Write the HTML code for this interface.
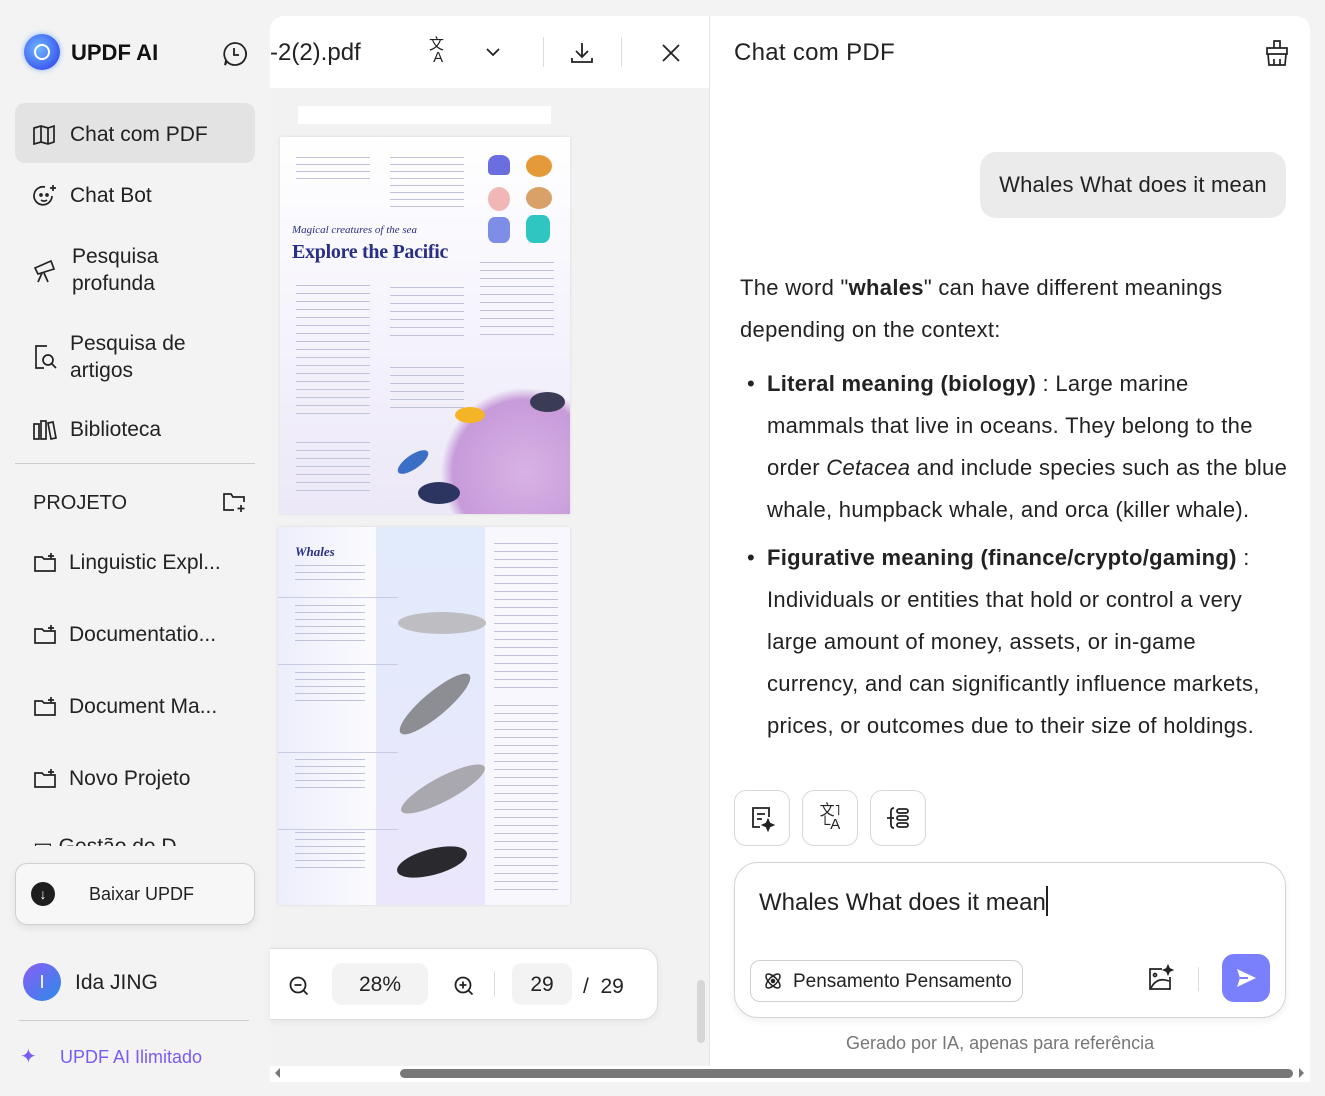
<!DOCTYPE html>
<html><head><meta charset="utf-8"><style>
*{margin:0;padding:0;box-sizing:border-box}
body{width:1325px;height:1096px;background:#f3f3f3;font-family:"Liberation Sans",sans-serif;color:#222;position:relative;overflow:hidden}
.a{position:absolute}
.nav{position:absolute;left:15px;width:240px;display:flex;align-items:center;font-size:21px;color:#222}
.nav svg{margin-left:17px;margin-right:12px;flex:none}
.ln{position:absolute;height:2px;background:#b9bcd8}
.btn{position:absolute;width:56px;height:56px;border:1px solid #d8d8d8;border-radius:12px;background:#fff;display:flex;align-items:center;justify-content:center}
.ct{font-size:22px;line-height:42px;letter-spacing:.3px;white-space:nowrap}
</style></head><body>
<!-- sidebar -->
<div class="a" style="left:24px;top:34px;width:36px;height:36px;border-radius:50%;background:radial-gradient(circle at 40% 40%,#6fb8ff,#3d5cf0 70%);box-shadow:0 0 6px #8ab4ff"></div>
<div class="a" style="left:34px;top:44px;width:16px;height:16px;border:2px solid #fff;border-radius:50%"></div>
<div class="a" style="left:71px;top:40px;font-size:22px;font-weight:bold;color:#111">UPDF AI</div>
<svg class="a" style="left:222px;top:41px" width="26" height="26" viewBox="0 0 26 26" fill="none" stroke="#222" stroke-width="1.8"><path d="M13 2a11 11 0 1 1-8 18.5L3 24l1-5A11 11 0 0 1 13 2z"/><path d="M12 7v7h5"/></svg>

<div class="a" style="left:15px;top:103px;width:240px;height:60px;background:#e3e3e3;border-radius:10px"></div>
<div class="nav" style="top:105px;height:60px"><svg width="26" height="24" viewBox="0 0 26 24" fill="none" stroke="#222" stroke-width="1.7"><path d="M2 5l7-2 7 2 6-2v16l-6 2-7-2-7 2z"/><path d="M9 3v16M16 5v16"/></svg>Chat com PDF</div>
<div class="nav" style="top:166px;height:60px"><svg width="26" height="26" viewBox="0 0 26 26" fill="none" stroke="#222" stroke-width="1.7"><path d="M20 13a9 9 0 1 1-7-9"/><circle cx="9" cy="12" r="1"/><circle cx="15" cy="12" r="1"/><path d="M9 17c2 1.5 4 1.5 6 0"/><path d="M21 2v6M18 5h6"/></svg>Chat Bot</div>
<div class="nav" style="top:240px;height:60px;line-height:27px"><svg width="28" height="28" viewBox="0 0 28 28" fill="none" stroke="#222" stroke-width="1.7"><path d="M3 12l16-7 3 8-16 5z"/><path d="M10 17l-4 9M12 17l4 9"/></svg>Pesquisa<br>profunda</div>
<div class="nav" style="top:327px;height:60px;line-height:27px"><svg width="26" height="28" viewBox="0 0 26 28" fill="none" stroke="#222" stroke-width="1.7"><path d="M15 3H4v22h8"/><circle cx="16" cy="17" r="5"/><path d="M20 21l4 4"/></svg>Pesquisa de<br>artigos</div>
<div class="nav" style="top:400px;height:60px"><svg width="26" height="24" viewBox="0 0 26 24" fill="none" stroke="#222" stroke-width="1.7"><rect x="2" y="6" width="5" height="15"/><rect x="9" y="3" width="5" height="18"/><path d="M16 5l5-1 3 16-5 1z"/></svg>Biblioteca</div>
<div class="a" style="left:15px;top:463px;width:240px;height:1px;background:#ccc"></div>
<div class="a" style="left:33px;top:492px;font-size:20px">PROJETO</div>
<svg class="a" style="left:222px;top:491px" width="26" height="22" viewBox="0 0 26 22" fill="none" stroke="#222" stroke-width="1.7"><path d="M12 19H2V3h7l2 3h11v5"/><path d="M19 14v7M15.5 17.5h7"/></svg>
<div class="nav" style="top:535px;height:56px;font-size:21px"><svg width="24" height="22" viewBox="0 0 24 22" fill="none" stroke="#222" stroke-width="1.7" style="margin-left:18px;margin-right:12px"><path d="M2 5h7l2 2h11v12H2z"/><path d="M18 1v6M15 4h6"/></svg>Linguistic Expl...</div>
<div class="nav" style="top:607px;height:56px"><svg width="24" height="22" viewBox="0 0 24 22" fill="none" stroke="#222" stroke-width="1.7" style="margin-left:18px;margin-right:12px"><path d="M2 5h7l2 2h11v12H2z"/><path d="M18 1v6M15 4h6"/></svg>Documentatio...</div>
<div class="nav" style="top:679px;height:56px"><svg width="24" height="22" viewBox="0 0 24 22" fill="none" stroke="#222" stroke-width="1.7" style="margin-left:18px;margin-right:12px"><path d="M2 5h7l2 2h11v12H2z"/><path d="M18 1v6M15 4h6"/></svg>Document Ma...</div>
<div class="nav" style="top:751px;height:56px"><svg width="24" height="22" viewBox="0 0 24 22" fill="none" stroke="#222" stroke-width="1.7" style="margin-left:18px;margin-right:12px"><path d="M2 5h7l2 2h11v12H2z"/><path d="M18 1v6M15 4h6"/></svg>Novo Projeto</div>
<div class="a" style="left:33px;top:838px;width:200px;height:8px;overflow:hidden"><div style="font-size:21px;color:#222;margin-top:-4px">▭ Gestão de D</div></div>
<div class="a" style="left:15px;top:863px;width:240px;height:62px;background:#f7f7f7;border:1px solid #d0d0d0;border-radius:12px;box-shadow:0 3px 8px rgba(0,0,0,.08)"></div>
<div class="a" style="left:31px;top:882px;width:24px;height:24px;border-radius:50%;background:#1e1e1e;color:#fff;font-size:14px;text-align:center;line-height:24px">↓</div>
<div class="a" style="left:89px;top:884px;font-size:18px">Baixar UPDF</div>
<div class="a" style="left:23px;top:963px;width:38px;height:38px;border-radius:50%;background:linear-gradient(135deg,#8b5cf6,#2b8be8);color:#fff;text-align:center;line-height:38px;font-size:18px">I</div>
<div class="a" style="left:75px;top:971px;font-size:21px">Ida JING</div>
<div class="a" style="left:19px;top:1020px;width:230px;height:1px;background:#ccc"></div>
<div class="a" style="left:20px;top:1044px;font-size:20px;color:#7b5cf0">✦</div>
<div class="a" style="left:60px;top:1047px;font-size:18px;color:#7b5cf0">UPDF AI Ilimitado</div>

<!-- main panel -->
<div class="a" style="left:270px;top:16px;width:1040px;height:1066px;background:#fff;border-radius:14px 14px 6px 6px;overflow:hidden">
 <div class="a" style="left:0;top:72px;width:439px;height:994px;background:#f2f2f2"></div>
 <div class="a" style="left:439px;top:0;width:1px;height:1066px;background:#e4e4e4"></div>
</div>
<div class="a" style="left:270px;top:39px;font-size:24px;color:#222">-2(2).pdf</div>
<div class="a" style="left:429px;top:38px;font-size:15px;line-height:13px;color:#222">文<br>&nbsp;A</div>
<svg class="a" style="left:484px;top:46px" width="18" height="12" viewBox="0 0 18 12" fill="none" stroke="#222" stroke-width="1.8"><path d="M3 3l6 6 6-6"/></svg>
<div class="a" style="left:543px;top:37px;width:1px;height:30px;background:#ddd"></div>
<svg class="a" style="left:569px;top:40px" width="26" height="26" viewBox="0 0 26 26" fill="none" stroke="#222" stroke-width="1.8"><path d="M13 3v14M7 11l6 6 6-6M3 18v4h20v-4"/></svg>
<div class="a" style="left:621px;top:37px;width:1px;height:30px;background:#ddd"></div>
<svg class="a" style="left:660px;top:42px" width="22" height="22" viewBox="0 0 22 22" stroke="#222" stroke-width="1.8"><path d="M3 3l16 16M19 3L3 19"/></svg>

<div class="a" style="left:298px;top:106px;width:253px;height:18px;background:#fff"></div>
<!-- page 1 -->
<div class="a" style="left:280px;top:137px;width:290px;height:377px;background:linear-gradient(180deg,#fff 0%,#f3f1fb 60%,#ece8f7 100%);box-shadow:0 0 3px rgba(0,0,0,.1);overflow:hidden">
 <div class="ln" style="left:16px;top:20px;width:74px;height:28px;background:repeating-linear-gradient(#c0c2dc 0 1px,transparent 1px 7px)"></div>
 <div class="ln" style="left:110px;top:20px;width:74px;height:56px;background:repeating-linear-gradient(#c0c2dc 0 1px,transparent 1px 7px)"></div>
 <div class="a" style="left:208px;top:18px;width:22px;height:20px;background:#6c6ee0;border-radius:40% 40% 4px 4px"></div>
 <div class="a" style="left:246px;top:18px;width:26px;height:22px;background:#e59a3a;border-radius:50%"></div>
 <div class="a" style="left:208px;top:50px;width:22px;height:24px;background:#f1b7b7;border-radius:50%"></div>
 <div class="a" style="left:246px;top:50px;width:26px;height:22px;background:#d9a067;border-radius:50%"></div>
 <div class="a" style="left:208px;top:80px;width:22px;height:26px;background:#7e8ee6;border-radius:30%"></div>
 <div class="a" style="left:246px;top:78px;width:24px;height:28px;background:#2fc6c2;border-radius:30%"></div>
 <div class="a" style="left:12px;top:87px;font-family:'Liberation Serif',serif;font-style:italic;font-size:11px;color:#2a2f86">Magical creatures of the sea</div>
 <div class="a" style="left:12px;top:104px;font-family:'Liberation Serif',serif;font-weight:bold;font-size:20px;color:#2a2f86;letter-spacing:-.3px">Explore the Pacific</div>
 <div class="ln" style="left:16px;top:148px;width:74px;height:130px;background:repeating-linear-gradient(#c0c2dc 0 1px,transparent 1px 8px)"></div>
 <div class="ln" style="left:110px;top:150px;width:74px;height:56px;background:repeating-linear-gradient(#c0c2dc 0 1px,transparent 1px 8px)"></div>
 <div class="ln" style="left:110px;top:230px;width:74px;height:48px;background:repeating-linear-gradient(#c0c2dc 0 1px,transparent 1px 8px)"></div>
 <div class="ln" style="left:200px;top:125px;width:74px;height:80px;background:repeating-linear-gradient(#c0c2dc 0 1px,transparent 1px 8px)"></div>
 <div class="ln" style="left:16px;top:305px;width:74px;height:50px;background:repeating-linear-gradient(#c0c2dc 0 1px,transparent 1px 8px)"></div>
 <div class="a" style="left:160px;top:250px;width:170px;height:170px;border-radius:50%;background:radial-gradient(circle,#d8b3e6,#c79ad9 60%,transparent 70%)"></div>
 <div class="a" style="left:175px;top:270px;width:30px;height:16px;background:#f3b525;border-radius:50%"></div>
 <div class="a" style="left:250px;top:255px;width:35px;height:20px;background:#3a3c55;border-radius:50%"></div>
 <div class="a" style="left:138px;top:345px;width:42px;height:22px;background:#2b3560;border-radius:50%"></div>
 <div class="a" style="left:115px;top:318px;width:36px;height:14px;background:#3b6fc6;border-radius:50%;transform:rotate(-35deg)"></div>
</div>
<!-- page 2 -->
<div class="a" style="left:278px;top:527px;width:292px;height:378px;background:#f7f7fd;box-shadow:0 0 3px rgba(0,0,0,.1);overflow:hidden">
 <div class="a" style="left:0;top:0;width:98px;height:378px;background:linear-gradient(90deg,#eceefb,#fbfbff)"></div>
 <div class="a" style="left:98px;top:0;width:109px;height:378px;background:linear-gradient(#e1ebfc,#ebe6fb)"></div>
 <div class="a" style="left:17px;top:17px;font-family:'Liberation Serif',serif;font-style:italic;font-weight:bold;font-size:13px;color:#2a2f86">Whales</div>
 <div class="ln" style="left:17px;top:38px;width:70px;height:16px;background:repeating-linear-gradient(#c0c2dc 0 1px,transparent 1px 7px)"></div>
 <div class="ln" style="left:17px;top:78px;width:70px;height:40px;background:repeating-linear-gradient(#c0c2dc 0 1px,transparent 1px 7px)"></div>
 <div class="ln" style="left:17px;top:145px;width:70px;height:30px;background:repeating-linear-gradient(#c0c2dc 0 1px,transparent 1px 7px)"></div>
 <div class="ln" style="left:17px;top:232px;width:70px;height:30px;background:repeating-linear-gradient(#c0c2dc 0 1px,transparent 1px 7px)"></div>
 <div class="ln" style="left:17px;top:305px;width:70px;height:40px;background:repeating-linear-gradient(#c0c2dc 0 1px,transparent 1px 7px)"></div>
 <div class="a" style="left:0;top:70px;width:120px;height:1px;background:#c9cbe3"></div>
 <div class="a" style="left:0;top:137px;width:120px;height:1px;background:#c9cbe3"></div>
 <div class="a" style="left:0;top:225px;width:120px;height:1px;background:#c9cbe3"></div>
 <div class="a" style="left:0;top:302px;width:120px;height:1px;background:#c9cbe3"></div>
 <div class="a" style="left:120px;top:85px;width:88px;height:22px;background:#bdbdc2;border-radius:50%"></div>
 <div class="a" style="left:112px;top:165px;width:90px;height:24px;background:#8d8d94;border-radius:50%;transform:rotate(-40deg)"></div>
 <div class="a" style="left:118px;top:250px;width:94px;height:24px;background:#a8a8ae;border-radius:50%;transform:rotate(-28deg)"></div>
 <div class="a" style="left:118px;top:322px;width:72px;height:26px;background:#2a2a2e;border-radius:50%;transform:rotate(-15deg)"></div>
 <div class="ln" style="left:216px;top:16px;width:64px;height:150px;background:repeating-linear-gradient(#c0c2dc 0 1px,transparent 1px 8px)"></div>
 <div class="ln" style="left:216px;top:178px;width:64px;height:190px;background:repeating-linear-gradient(#c0c2dc 0 1px,transparent 1px 8px)"></div>
</div>
<!-- zoom bar -->
<div class="a" style="left:270px;top:948px;width:388px;height:72px;background:#fff;border:1px solid #ddd;border-left:none;border-radius:0 16px 16px 0;box-shadow:0 2px 8px rgba(0,0,0,.06)"></div>
<svg class="a" style="left:288px;top:975px" width="22" height="22" viewBox="0 0 22 22" fill="none" stroke="#222" stroke-width="1.8"><circle cx="10" cy="10" r="7.5"/><path d="M6.5 10h7M15.5 15.5l4 4"/></svg>
<div class="a" style="left:332px;top:963px;width:96px;height:42px;background:#f3f3f3;border-radius:10px;text-align:center;line-height:44px;font-size:21px">28%</div>
<svg class="a" style="left:453px;top:975px" width="22" height="22" viewBox="0 0 22 22" fill="none" stroke="#222" stroke-width="1.8"><circle cx="10" cy="10" r="7.5"/><path d="M6.5 10h7M10 6.5v7M15.5 15.5l4 4"/></svg>
<div class="a" style="left:494px;top:971px;width:1px;height:26px;background:#ddd"></div>
<div class="a" style="left:512px;top:963px;width:60px;height:42px;background:#f3f3f3;border-radius:10px;text-align:center;line-height:44px;font-size:21px">29</div>
<div class="a" style="left:583px;top:975px;font-size:21px">/ &nbsp;29</div>
<div class="a" style="left:697px;top:980px;width:8px;height:63px;background:#d6d6d6;border-radius:4px"></div>
<!-- hscroll -->
<div class="a" style="left:270px;top:1066px;width:1040px;height:16px;background:#fff"></div>
<div class="a" style="left:400px;top:1069px;width:893px;height:9px;background:#777;border-radius:5px"></div>
<div class="a" style="left:275px;top:1068px;border:5px solid transparent;border-right:5px solid #777;border-left:none"></div>
<div class="a" style="left:1299px;top:1068px;border:5px solid transparent;border-left:5px solid #777;border-right:none"></div>

<!-- chat -->
<div class="a" style="left:734px;top:39px;font-size:24px;letter-spacing:.3px">Chat com PDF</div>
<svg class="a" style="left:1264px;top:38px" width="26" height="30" viewBox="0 0 26 30" fill="none" stroke="#222" stroke-width="1.7"><path d="M10 10V3h6v7M3 10h20v6H3zM4 16l1 11h16l1-11M10 21v6M16 21v6"/></svg>
<div class="a" style="left:980px;top:152px;width:306px;height:66px;background:#ebebeb;border-radius:16px;font-size:22px;letter-spacing:.2px;line-height:66px;text-align:center">Whales What does it mean</div>
<div class="a ct" style="left:740px;top:267px">The word "<b>whales</b>" can have different meanings<br>depending on the context:</div>
<div class="a ct" style="left:747px;top:363px">•</div>
<div class="a ct" style="left:767px;top:363px"><b>Literal meaning (biology)</b> : Large marine<br>mammals that live in oceans. They belong to the<br>order <i>Cetacea</i> and include species such as the blue<br>whale, humpback whale, and orca (killer whale).</div>
<div class="a ct" style="left:747px;top:537px">•</div>
<div class="a ct" style="left:767px;top:537px"><b>Figurative meaning (finance/crypto/gaming)</b> :<br>Individuals or entities that hold or control a very<br>large amount of money, assets, or in-game<br>currency, and can significantly influence markets,<br>prices, or outcomes due to their size of holdings.</div>
<div class="btn" style="left:734px;top:790px"><svg width="28" height="28" viewBox="0 0 28 28" fill="none" stroke="#222" stroke-width="1.8"><path d="M12 23H5V4h16v9"/><path d="M9 10h8M9 15h5"/><path d="M20 16l1.5 3.5 3.5 1.5-3.5 1.5L20 26l-1.5-3.5L15 21l3.5-1.5z" fill="#222"/></svg></div>
<div class="btn" style="left:802px;top:790px"><div style="font-size:15px;line-height:14px">文˥<br>└A</div></div>
<div class="btn" style="left:870px;top:790px"><svg width="28" height="28" viewBox="0 0 28 28" fill="none" stroke="#222" stroke-width="1.8"><path d="M10 4C6 4 7 8 7 14s-1 10 3 10M3 14h7"/><rect x="13" y="5" width="11" height="4" rx="2"/><rect x="13" y="12" width="11" height="4" rx="2"/><rect x="13" y="19" width="11" height="4" rx="2"/></svg></div>
<div class="a" style="left:734px;top:862px;width:552px;height:156px;border:1px solid #d4d4d4;border-radius:24px;background:#fff;box-shadow:0 3px 8px rgba(0,0,0,.06)"></div>
<div class="a" style="left:759px;top:886px;font-size:24px">Whales What does it mean<span style="display:inline-block;width:2px;height:30px;background:#222;vertical-align:-6px"></span></div>
<div class="a" style="left:750px;top:960px;width:273px;height:42px;border:1px solid #d0d0d0;border-radius:10px"></div>
<svg class="a" style="left:763px;top:971px" width="20" height="20" viewBox="0 0 20 20" fill="none" stroke="#222" stroke-width="1.5"><ellipse cx="10" cy="10" rx="9" ry="4" transform="rotate(45 10 10)"/><ellipse cx="10" cy="10" rx="9" ry="4" transform="rotate(-45 10 10)"/><circle cx="10" cy="10" r="1.5" fill="#222"/></svg>
<div class="a" style="left:793px;top:971px;font-size:19px">Pensamento Pensamento</div>
<svg class="a" style="left:1146px;top:964px" width="28" height="28" viewBox="0 0 28 28" fill="none" stroke="#222" stroke-width="1.7"><path d="M16 5H4v20h20V13"/><circle cx="9" cy="11" r="1.5"/><path d="M5 24c4-8 10-10 18-7"/><path d="M22 2l1.2 2.8L26 6l-2.8 1.2L22 10l-1.2-2.8L18 6l2.8-1.2z" fill="#222"/></svg>
<div class="a" style="left:1198px;top:967px;width:1px;height:24px;background:#ddd"></div>
<div class="a" style="left:1222px;top:954px;width:48px;height:48px;background:#7a7ffb;border-radius:12px"></div>
<svg class="a" style="left:1234px;top:966px" width="24" height="24" viewBox="0 0 24 24"><path d="M3 3l19 9-19 9 3-9z" fill="#fff"/><path d="M6 12h8" stroke="#7a7ffb" stroke-width="2"/></svg>
<div class="a" style="left:846px;top:1033px;font-size:18px;color:#777">Gerado por IA, apenas para referência</div>
</body></html>
